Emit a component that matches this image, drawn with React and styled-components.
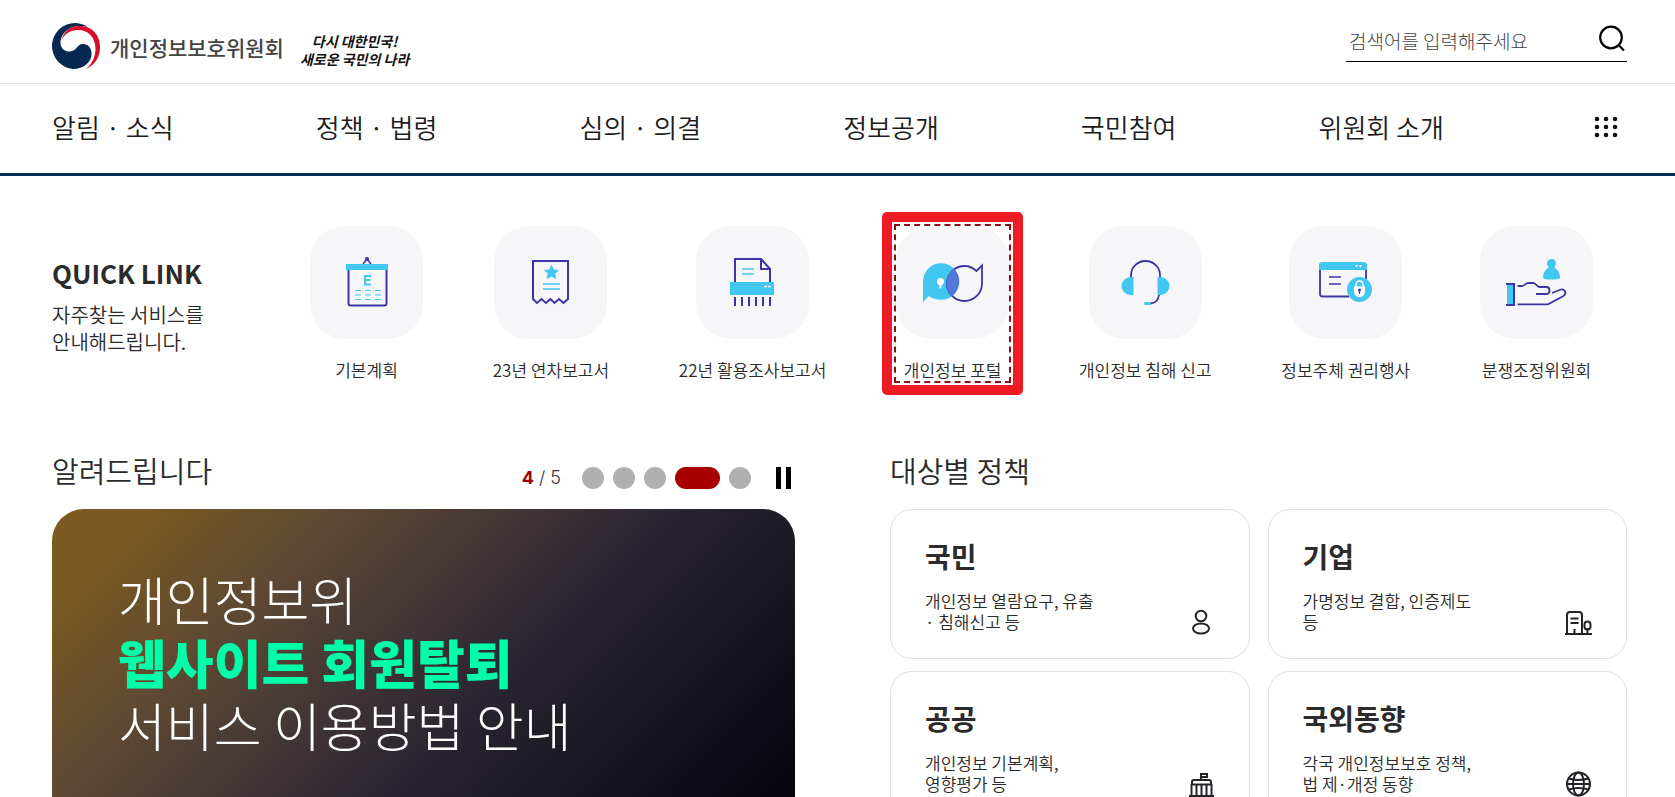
import React from 'react'
import styled, { createGlobalStyle, css } from 'styled-components'

const GlobalStyle = createGlobalStyle`
  *,
  *::before,
  *::after {
    box-sizing: border-box;
  }

  body {
    margin: 0;
    background: #fff;
    color: #2b2b2b;
    font-family: 'Noto Sans CJK KR', 'Noto Sans', sans-serif;
    font-weight: 350;
  }

  h1,
  h2,
  h3,
  p,
  ul {
    margin: 0;
    padding: 0;
    font-weight: inherit;
  }

  ul {
    list-style: none;
  }

  a {
    color: inherit;
    text-decoration: none;
  }

  button {
    padding: 0;
    border: 0;
    background: none;
    cursor: pointer;
  }

  svg {
    display: block;
  }
`

const CYAN = '#42c8f0'
const INDIGO = '#3d35a6'

const Page = styled.div`
  height: 100vh;
  overflow: hidden;
`

/* header */

const TopBar = styled.header`
  display: flex;
  align-items: center;
  justify-content: space-between;
  height: 84px;
  padding: 0 48px 0 52px;
  border-bottom: 1px solid #e4e4e4;
`

const Brand = styled.a`
  display: flex;
  align-items: center;
  padding-top: 10px;
`

const BrandName = styled.span`
  margin-left: 9px;
  color: #444;
  font-size: 21px;
  font-weight: 500;
  line-height: 30px;
`

const Slogan = styled.span`
  margin-left: 16px;
  padding-top: 6px;
  color: #111;
  font-size: 14px;
  font-style: italic;
  font-weight: 700;
  line-height: 18px;
  text-align: center;
`

const SearchForm = styled.form`
  display: flex;
  align-items: center;
  width: 281px;
  height: 44px;
  margin-bottom: 4px;
  border-bottom: 1px solid #000;
`

const SearchInput = styled.input`
  flex: 1;
  min-width: 0;
  padding: 2px 3px 0;
  border: 0;
  outline: 0;
  background: none;
  font-family: inherit;
  font-size: 19px;
  font-weight: 300;

  &::placeholder {
    color: #444;
    opacity: 1;
  }
`

const SearchButton = styled.button`
  margin-right: 1px;
`

const Nav = styled.nav`
  display: flex;
  align-items: center;
  justify-content: space-between;
  height: 92px;
  padding: 0 48px 4px 52px;
  border-bottom: 3px solid #052b57;
`

const NavLink = styled.a`
  color: #1c1c1c;
  font-size: 26px;
  line-height: 40px;
`

const AllMenuButton = styled.button`
  display: flex;
  justify-content: center;
  width: 41px;
`

/* quick links */

const QuickLink = styled.section`
  display: flex;
  align-items: flex-start;
  padding: 50px 82px 0 52px;
`

const QuickIntro = styled.div`
  flex: none;
  width: 258px;
  padding-top: 27px;
  font-size: 20px;
  line-height: 27px;
`

const QuickTitle = styled.h2`
  margin-bottom: 8px;
  font-size: 26px;
  font-weight: 700;
  line-height: 40px;
`

const QuickList = styled.ul`
  display: flex;
  flex: 1;
  justify-content: space-between;
`

const QuickItem = styled.a`
  position: relative;
  display: flex;
  flex-direction: column;
  align-items: center;
  gap: 20px;
  font-size: 17px;
  line-height: 22px;
  white-space: nowrap;

  ${props =>
    props.$active &&
    css`
      outline: 2px dashed #8b0f12;

      &::after {
        content: '';
        position: absolute;
        inset: -14px;
        border: 10px solid #ed1c24;
        border-radius: 5px;
      }
    `}
`

const Tile = styled.span`
  width: 113px;
  height: 113px;
  border-radius: 35px;
  background: #f6f6f9;
`

/* main columns */

const Columns = styled.main`
  display: grid;
  grid-template-columns: 743fr 737fr;
  gap: 95px;
  padding: 68px 48px 0 52px;
`

const SectionHead = styled.div`
  display: flex;
  justify-content: space-between;
  height: 42px;
  margin-bottom: 18px;
`

const SectionTitle = styled.h2`
  font-size: 29px;
  line-height: 42px;
`

const Controls = styled.div`
  display: flex;
  align-items: center;
  padding: 16px 4px 0 0;
`

const Counter = styled.span`
  margin-right: 21px;
  color: #333;
  font-family: Inter, 'Noto Sans', sans-serif;
  font-size: 18px;
  font-weight: 300;
  line-height: 24px;

  strong {
    color: #9b0000;
    font-weight: 700;
  }
`

const Dots = styled.div`
  display: flex;
  gap: 9px;
  margin-right: 25px;
`

const Dot = styled.button`
  width: ${props => (props.$active ? '45px' : '22px')};
  height: 22px;
  border-radius: 11px;
  background: ${props => (props.$active ? '#a80000' : '#b0b0b0')};
`

const PauseButton = styled.button`
  width: 15px;
  height: 22px;
  border: solid #000;
  border-width: 0 5px;
`

const Banner = styled.a`
  display: block;
  min-height: 400px;
  padding: 58px 66px;
  border-radius: 32px;
  background: linear-gradient(
    135deg,
    #7a5a20 8%,
    #5e4933 25%,
    #3f3436 42%,
    #2a2530 54%,
    #1b1a25 67%,
    #0d0b16 81%,
    #050408 92%
  );
  color: #fff;
  font-size: 52px;
  font-weight: 200;
  line-height: 63px;

  strong {
    display: block;
    color: #00ffa8;
    font-weight: 900;
  }
`

const CardGrid = styled.div`
  display: grid;
  grid-template-columns: 1fr 1fr;
  gap: 12px 18px;
`

const Card = styled.a`
  display: flex;
  align-items: flex-end;
  justify-content: space-between;
  height: 150px;
  padding: 0 34px 22px;
  border: 1px solid #dfdfe8;
  border-radius: 22px;
`

const CardBody = styled.div`
  padding-bottom: 4px;
`

const CardTitle = styled.h3`
  margin-bottom: 13px;
  font-size: 28px;
  font-weight: 700;
  line-height: 42px;
`

const CardText = styled.p`
  font-size: 17px;
  line-height: 21px;
  white-space: pre-line;
`

const Logo = () => (
  <svg width="49" height="47" viewBox="0 0 49 47">
    <path
      fill="#04284f"
      d="M36 4C31 1 27 0 23 0A23 23 0 0 0 0 23a23 23 0 0 0 21 23c11 0 19-7 18.500-16 0-5-3.500-9-8.500-9-6 0-6 7-13 7.500-6 0-10-3.500-9.500-10.500C10 10 17 3 28 3q5 0 8 1z"
    />
    <path
      fill="#d80b28"
      d="M9 19C11 9 18 3 28 3c12 0 20 9 20 21 0 10-5 18-14 22 6-5 9.500-12 9.500-20C43.500 14 36 7 26 7 17 7 11 12 9 19z"
    />
  </svg>
)

const SearchIcon = () => (
  <svg width="28" height="28" viewBox="0 0 28 28" fill="none" stroke="#000" strokeWidth="2.200">
    <circle cx="13" cy="12.500" r="10.800" />
    <path d="M20 19.500l6 6" />
  </svg>
)

const GridIcon = () => (
  <svg width="24" height="22" viewBox="0 0 24 22" fill="#111">
    {[3, 11, 19].map(y =>
      [3, 12, 21].map(x => <circle key={`${x}-${y}`} cx={x} cy={y} r="2.300" />)
    )}
  </svg>
)

const TileIcon = ({ children }) => (
  <svg width="113" height="113" viewBox="0 0 113 113" fill="none" stroke={INDIGO} strokeWidth="2">
    {children}
  </svg>
)

const PlanIcon = () => (
  <TileIcon>
    <path d="M53 38l4-5 4 5" strokeWidth="1.500" />
    <circle cx="57" cy="33" r="2" fill={INDIGO} stroke="none" />
    <path d="M38.500 42v35.500q0 2 2 2h34q2 0 2-2V42" />
    <path d="M36 38h42v6H36z" fill={CYAN} stroke="none" />
    <path d="M61 50h-6v8.500h6M55 54h5.500" stroke={CYAN} />
    <path
      d="M45 64.500h6m4 0h6m4 0h6M45 69h6m4 0h6m4 0h6M45 73.500h6m4 0h6m4 0h6"
      stroke={CYAN}
      strokeWidth="1.200"
    />
  </TileIcon>
)

const ReportIcon = () => (
  <TileIcon>
    <path d="M39 73V35h35v38l-4.500 4-4.500-4-4.500 4-4-4-4.500 4-4.500-4-4.500 4z" />
    <path
      d="M57.500 39.500l2 4.400 4.800.500-3.600 3.200 1 4.800-4.200-2.400-4.200 2.400 1-4.800-3.600-3.200 4.800-.500z"
      fill={CYAN}
      stroke={CYAN}
      strokeWidth="1"
    />
    <path d="M49 58h17M49 63h17" stroke={CYAN} strokeWidth="1.500" />
  </TileIcon>
)

const ShredderIcon = () => (
  <TileIcon>
    <path d="M39 56V33h26l9 10v13M65 33v10h9" />
    <path d="M46 43h12M46 48h12" stroke={CYAN} strokeWidth="1.500" />
    <path d="M34 56h44v13H34z" fill={CYAN} stroke="none" />
    <path d="M68 60.500h3m1 0h3" stroke="#fff" strokeWidth="1.500" />
    <path d="M39 71v9m7-9v9m7-9v9m7-9v9m7-9v9m7-9v9" />
  </TileIcon>
)

const PortalIcon = () => (
  <TileIcon>
    <clipPath id="portal-lens">
      <circle cx="45" cy="55.500" r="18.300" />
    </clipPath>
    <path
      d="M27 76V55.500A18 18.300 0 1 1 45 73.800Q38 73.800 33 70z"
      fill={CYAN}
      stroke="none"
    />
    <path d="M86 39.500V57.500A17.500 17.500 0 1 1 69 40Q75 40 80.500 45z" strokeWidth="1.800" />
    <circle
      cx="69.500"
      cy="57.500"
      r="19"
      fill="#5279d8"
      stroke="none"
      clipPath="url(#portal-lens)"
    />
    <circle cx="44.500" cy="55.500" r="3.500" fill="#fff" stroke="none" />
    <path d="M44.500 56v6.500" stroke="#fff" />
  </TileIcon>
)

const HeadsetIcon = () => (
  <TileIcon>
    <path d="M42 51v-2a14.500 14 0 0 1 29 0v2M70 69q-1 8-9 8.500" strokeWidth="1.800" />
    <path
      d="M44.500 51v18h-3a9 9 0 0 1 0-18zM68.500 51v18h3a9 9 0 0 0 0-18z"
      fill={CYAN}
      stroke="none"
    />
    <path d="M56.500 77.500h4" stroke={CYAN} strokeWidth="3" strokeLinecap="round" />
  </TileIcon>
)

const RightsIcon = () => (
  <TileIcon>
    <path d="M31 42v26q0 2.500 2.500 2.500H60M77 43v10" strokeWidth="1.800" />
    <path d="M30 44v-5q0-3 3-3h42q3 0 3 3v5z" fill={CYAN} stroke="none" />
    <path d="M66.500 40h2m2 0h2" stroke="#fff" />
    <path d="M40 51h12M40 58h12" strokeWidth="1.500" />
    <circle cx="70.500" cy="63.500" r="12.500" fill={CYAN} stroke="none" />
    <path d="M67 61v-2.500a3.500 3.500 0 0 1 7 0V61" stroke="#fff" strokeWidth="1.500" />
    <path d="M65 60.500h11v5a5.500 5.500 0 0 1-11 0z" fill="#fff" stroke="none" />
    <circle cx="70.500" cy="64" r="1.500" fill={INDIGO} stroke="none" />
    <path d="M70.500 64v4" strokeWidth="1.200" />
  </TileIcon>
)

const MediationIcon = () => (
  <TileIcon>
    <path d="M27 58h7v21h-7z" fill={CYAN} stroke="none" />
    <path d="M26 58h8v21h-8" />
    <circle cx="71.500" cy="37.500" r="4.500" fill={CYAN} stroke="none" />
    <path
      d="M69 41h5c4 3 6 6 6 11-3 2-14 2-17 0 0-5 2-8 6-11z"
      fill={CYAN}
      stroke="none"
    />
    <path d="M37.500 60h5c3-1 3-3 6-3h5c3 1 4 4 6 4h7c4 0 4 7 0 7H56" strokeWidth="1.800" />
    <path d="M72 67l9-3.500c4-1 6 4 2.500 6.500L68 78.300H37.500" strokeWidth="1.800" />
  </TileIcon>
)

const CardIcon = ({ children }) => (
  <svg width="28" height="28" viewBox="0 0 28 28" fill="none" stroke="#222428" strokeWidth="2">
    {children}
  </svg>
)

const PersonIcon = () => (
  <CardIcon>
    <circle cx="14" cy="8" r="5.300" />
    <ellipse cx="14" cy="20.500" rx="8" ry="5" />
  </CardIcon>
)

const CompanyIcon = () => (
  <CardIcon>
    <path d="M1 26h27M3 26V7q0-3 3-3h9q3 0 3 3v19M6.500 10.500h8M6.500 15h8M10.500 21v5M23.500 20v6" />
    <rect x="20.500" y="13.500" width="6" height="8" rx="3" />
  </CardIcon>
)

const PublicIcon = () => (
  <CardIcon>
    <path d="M14 10V3M14 4h6v3h-6M2 26h25M4.500 26V14M24.500 26V14M9.500 26V15M14.500 26V15M19.500 26V15M4 14.500h21M5 14V12q0-2 2-2h15q2 0 2 2v2" />
  </CardIcon>
)

const GlobeIcon = () => (
  <CardIcon>
    <circle cx="14.500" cy="14" r="11.500" />
    <ellipse cx="14.500" cy="14" rx="5.500" ry="11.500" />
    <path d="M4.500 8.500q10 3 20 0M4.500 19.500q10-3 20 0M3 14h23" />
  </CardIcon>
)

const menus = ['알림 · 소식', '정책 · 법령', '심의 · 의결', '정보공개', '국민참여', '위원회 소개']

const quickLinks = [
  { label: '기본계획', Icon: PlanIcon },
  { label: '23년 연차보고서', Icon: ReportIcon },
  { label: '22년 활용조사보고서', Icon: ShredderIcon },
  { label: '개인정보 포털', Icon: PortalIcon, active: true },
  { label: '개인정보 침해 신고', Icon: HeadsetIcon },
  { label: '정보주체 권리행사', Icon: RightsIcon },
  { label: '분쟁조정위원회', Icon: MediationIcon },
]

const policies = [
  { title: '국민', text: '개인정보 열람요구, 유출\n· 침해신고 등', Icon: PersonIcon },
  { title: '기업', text: '가명정보 결합, 인증제도\n등', Icon: CompanyIcon },
  { title: '공공', text: '개인정보 기본계획,\n영향평가 등', Icon: PublicIcon },
  { title: '국외동향', text: '각국 개인정보보호 정책,\n법 제·개정 동향', Icon: GlobeIcon },
]

const slides = [1, 2, 3, 4, 5]
const currentSlide = 4

const App = () => (
  <Page>
    <GlobalStyle />
    <TopBar>
      <Brand href="#">
        <Logo />
        <BrandName>개인정보보호위원회</BrandName>
        <Slogan>
          다시 대한민국!
          <br />
          새로운 국민의 나라
        </Slogan>
      </Brand>
      <SearchForm role="search">
        <SearchInput type="text" aria-label="검색어" placeholder="검색어를 입력해주세요" />
        <SearchButton type="button" aria-label="검색">
          <SearchIcon />
        </SearchButton>
      </SearchForm>
    </TopBar>
    <Nav>
      {menus.map(menu => (
        <NavLink key={menu} href="#">
          {menu}
        </NavLink>
      ))}
      <AllMenuButton type="button" aria-label="전체메뉴">
        <GridIcon />
      </AllMenuButton>
    </Nav>
    <QuickLink>
      <QuickIntro>
        <QuickTitle>QUICK LINK</QuickTitle>
        <p>
          자주찾는 서비스를
          <br />
          안내해드립니다.
        </p>
      </QuickIntro>
      <QuickList>
        {quickLinks.map(({ label, Icon, active }) => (
          <li key={label}>
            <QuickItem href="#" $active={active}>
              <Tile>
                <Icon />
              </Tile>
              {label}
            </QuickItem>
          </li>
        ))}
      </QuickList>
    </QuickLink>
    <Columns>
      <section>
        <SectionHead>
          <SectionTitle>알려드립니다</SectionTitle>
          <Controls>
            <Counter>
              <strong>{currentSlide}</strong> / {slides.length}
            </Counter>
            <Dots>
              {slides.map(slide => (
                <Dot
                  key={slide}
                  type="button"
                  aria-label={`${slide}번 배너`}
                  $active={slide === currentSlide}
                />
              ))}
            </Dots>
            <PauseButton type="button" aria-label="정지" />
          </Controls>
        </SectionHead>
        <Banner href="#">
          개인정보위
          <strong>웹사이트 회원탈퇴</strong>
          서비스 이용방법 안내
        </Banner>
      </section>
      <section>
        <SectionHead>
          <SectionTitle>대상별 정책</SectionTitle>
        </SectionHead>
        <CardGrid>
          {policies.map(({ title, text, Icon }) => (
            <Card key={title} href="#">
              <CardBody>
                <CardTitle>{title}</CardTitle>
                <CardText>{text}</CardText>
              </CardBody>
              <Icon />
            </Card>
          ))}
        </CardGrid>
      </section>
    </Columns>
  </Page>
)

export default App
